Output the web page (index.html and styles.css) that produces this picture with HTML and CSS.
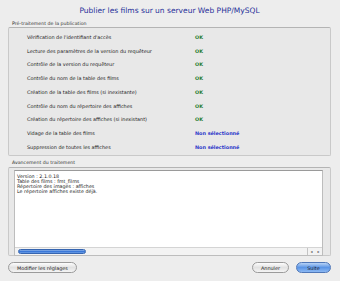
FILE: index.html
```html
<!DOCTYPE html>
<html lang="fr">
  <head>
    <meta charset="UTF-8" />
    <title>Publier les films</title>
    <link rel="stylesheet" href="styles.css">
  </head>
  <body>
    <div class="window">
      <h1 class="title">Publier les films sur un serveur Web PHP/MySQL</h1>

      <div class="group-label">Pré-traitement de la publication</div>
      <div class="group checks">
        <div class="row"><span>Vérification de l'identifiant d'accès</span><span class="ok">OK</span></div>
        <div class="row"><span>Lecture des paramètres de la version du requêteur</span><span class="ok">OK</span></div>
        <div class="row"><span>Contrôle de la version du requêteur</span><span class="ok">OK</span></div>
        <div class="row"><span>Contrôle du nom de la table des films</span><span class="ok">OK</span></div>
        <div class="row"><span>Création de la table des films (si inexistante)</span><span class="ok">OK</span></div>
        <div class="row"><span>Contrôle du nom du répertoire des affiches</span><span class="ok">OK</span></div>
        <div class="row"><span>Création du répertoire des affiches (si inexistant)</span><span class="ok">OK</span></div>
        <div class="row"><span>Vidage de la table des films</span><span class="no">Non sélectionné</span></div>
        <div class="row"><span>Suppression de toutes les affiches</span><span class="no">Non sélectionné</span></div>
      </div>

      <div class="group-label">Avancement du traitement</div>
      <div class="group progress">
        <div class="log">
          <div class="log-text">
            Version : 2.1.0.18<br>
            Table des films : fmt_films<br>
            Répertoire des images : affiches<br>
            Le répertoire affiches existe déjà.
          </div>
          <div class="hscroll">
            <div class="track"><div class="thumb"></div></div>
            <div class="arrows"><span>◂</span><span>▸</span></div>
          </div>
        </div>
      </div>

      <div class="buttons">
        <button class="btn">Modifier les réglages</button>
        <div class="spacer"></div>
        <button class="btn">Annuler</button>
        <button class="btn default">Suite</button>
      </div>
    </div>
  </body>
</html>
```

FILE: styles.css
```css
body {
  margin: 0;
  background: #ededed;
  font-family: "DejaVu Sans", sans-serif;
  color: #222;
}
.window {
  width: 340px;
  height: 281px;
  box-sizing: border-box;
  padding: 0 9px 0 8px;
  display: flex;
  flex-direction: column;
}
.title {
  margin: 5px 0 0;
  height: 12px;
  line-height: 12px;
  font-family: "DejaVu Sans", sans-serif;
  font-size: 7.5px;
  font-weight: normal;
  color: #27319a;
  text-align: center;
}
.group-label {
  font-size: 4.7px;
  line-height: 6px;
  margin: 4px 0 0 4px;
  color: #333;
}
.group {
  border: 1px solid #c9c9c9;
  border-top-color: #b4b4b4;
  border-radius: 2px;
  background: #e8e8e8;
}
.checks {
  height: 125px;
  padding: 2px 0 0 18px;
  display: flex;
  flex-direction: column;
}
.row {
  display: grid;
  grid-template-columns: 168px auto;
  height: 13.75px;
  align-items: center;
  font-size: 4.9px;
}
.ok {
  color: #1c7a2a;
  font-weight: bold;
}
.no {
  color: #2a36c8;
  font-weight: bold;
}
.progress {
  height: 89px;
  margin-top: 1px;
  padding: 2px 7px 1px 5px;
  box-sizing: border-box;
}
.log {
  height: 100%;
  background: #fff;
  border: 1px solid #bdbdbd;
  border-top-color: #9a9a9a;
  display: flex;
  flex-direction: column;
}
.log-text {
  flex: 1;
  padding: 3px 0 0 2px;
  font-size: 4.8px;
  line-height: 5.1px;
  color: #222;
}
.hscroll {
  height: 7px;
  display: flex;
  border-top: 1px solid #d4d4d4;
  background: #f3f3f3;
}
.track {
  flex: 1;
  padding: 1px 0 0 3px;
}
.thumb {
  width: 68px;
  height: 5px;
  border-radius: 3px;
  background: linear-gradient(#8fb4e8, #3b78d8 50%, #6fa0e6);
  border: 0.5px solid #3665b0;
  box-sizing: border-box;
}
.arrows {
  width: 14px;
  display: flex;
  font-size: 4px;
  color: #555;
  border-left: 1px solid #c4c4c4;
}
.arrows span {
  flex: 1;
  text-align: center;
  line-height: 7px;
}
.buttons {
  display: flex;
  align-items: center;
  gap: 7px;
  margin-top: 6px;
  height: 11px;
}
.spacer {
  flex: 1;
}
.btn {
  font-family: "DejaVu Sans", sans-serif;
  font-size: 4.9px;
  height: 11px;
  padding: 0 8px;
  border: 1px solid #9b9b9b;
  border-radius: 6px;
  background: linear-gradient(#fdfdfd, #e2e2e2 50%, #f4f4f4);
  color: #222;
  min-width: 35px;
}
.btn.default {
  background: linear-gradient(#b8d3f6, #5b95e6 50%, #8cb8f2);
  border-color: #4f77b8;
}
```
